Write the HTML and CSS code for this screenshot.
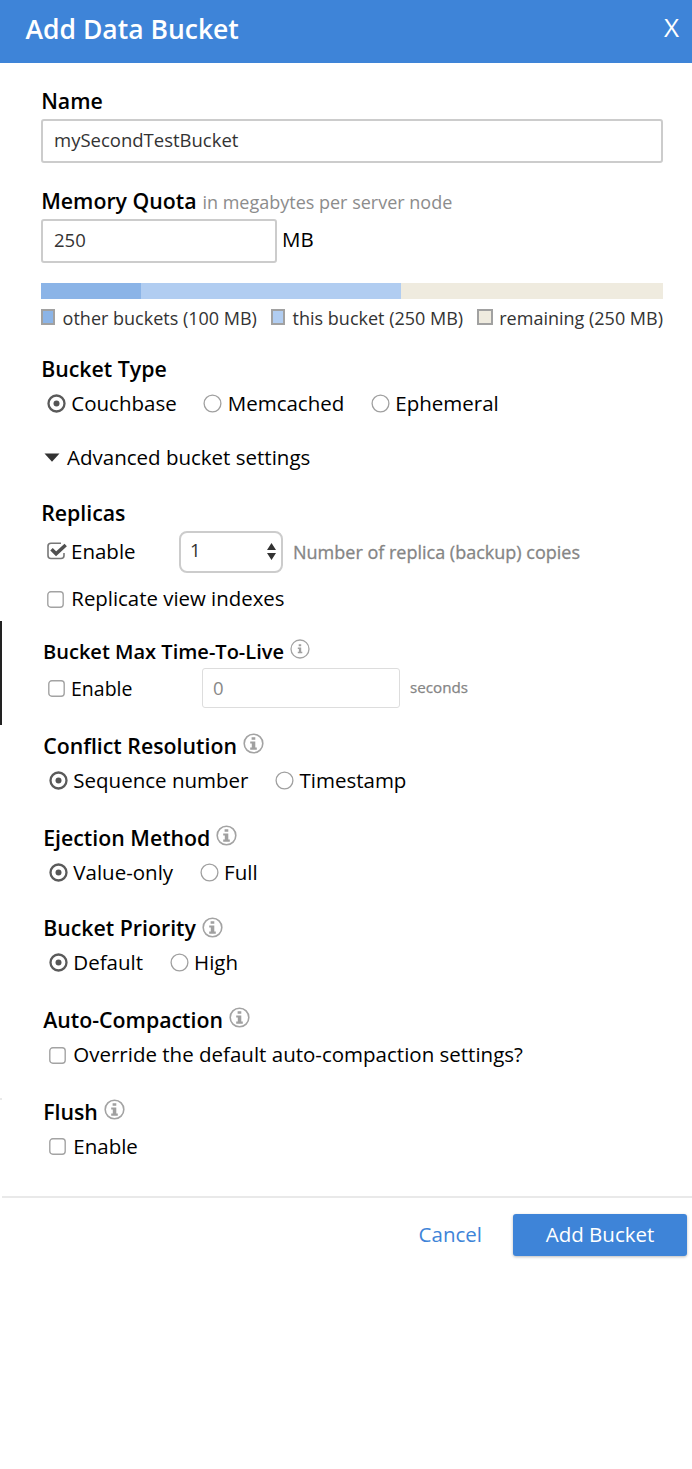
FILE: index.html
```html
<!DOCTYPE html>
<html lang="en">
<head>
<meta charset="utf-8">
<title>Add Data Bucket</title>
<link rel="stylesheet" href="styles.css">
</head>
<body>
<svg class="defs" width="0" height="0">
  <symbol id="info" viewBox="0 0 21 21"><circle cx="10.5" cy="10.5" r="9.3" fill="none" stroke="#a3a3a3" stroke-width="1.6"/><path d="M8.6 4.2h3.7v2.6H8.6zM7.2 8.4h5.1v6.2h1.5v2.1H7.2v-2.1h1.6v-4.1H7.2z" fill="#a0a0a0"/></symbol>
  <symbol id="info-thin" viewBox="0 0 20 20"><circle cx="10" cy="10" r="9" fill="none" stroke="#a3a3a3" stroke-width="1.3"/><path d="M8.7 5.3h2.5v1.9H8.7zM7.8 8.4h3.4v4.4h1.1v1.5H7.8v-1.5h1.1v-2.9H7.8z" fill="#a0a0a0"/></symbol>
  <symbol id="on" viewBox="0 0 19 19"><circle cx="9.5" cy="9.5" r="8" fill="none" stroke="#5a5a5a" stroke-width="2.3"/><circle cx="9.5" cy="9.5" r="3" fill="#555"/></symbol>
  <symbol id="off" viewBox="0 0 19 19"><circle cx="9.5" cy="9.5" r="8.4" fill="none" stroke="#a0a0a0" stroke-width="1.3"/></symbol>
  <symbol id="box" viewBox="0 0 17 17"><rect x=".8" y=".8" width="15.4" height="15.4" rx="3" fill="none" stroke="#a3a3a3" stroke-width="1.4"/></symbol>
</svg>
<span class="edge"></span><span class="tick"></span>
<header class="header"><h1 class="title">Add Data Bucket</h1><span class="close">X</span></header>
<main class="form">
  <section class="group name">
    <div class="row"><h2 class="label">Name</h2></div>
    <div class="input">mySecondTestBucket</div>
  </section>
  <section class="group quota">
    <div class="row"><h2 class="label">Memory Quota</h2><span class="hint">in megabytes per server node</span></div>
    <div class="quota-row"><div class="input short">250</div><span class="unit">MB</span></div>
    <div class="bar"><i class="used"></i><i class="this"></i></div>
    <div class="legend"><span><i class="swatch used"></i>other buckets (100 MB)</span><span><i class="swatch this"></i>this bucket (250 MB)</span><span><i class="swatch rest"></i>remaining (250 MB)</span></div>
  </section>
  <section class="group type">
    <div class="row"><h2 class="label">Bucket Type</h2></div>
    <div class="row options"><svg class="radio"><use href="#on"/></svg><span class="opt">Couchbase</span><svg class="radio"><use href="#off"/></svg><span class="opt">Memcached</span><svg class="radio"><use href="#off"/></svg><span class="opt">Ephemeral</span></div>
  </section>
  <div class="row advanced"><svg class="arrow" viewBox="0 0 16 9"><path d="M.5.5h15L8 8.7z" fill="#333"/></svg><span class="adv">Advanced bucket settings</span></div>
  <section class="group replicas">
    <div class="row"><h2 class="label">Replicas</h2></div>
    <div class="row replica-row">
      <svg class="checked" viewBox="0 0 20 18"><path d="M14 1.2H4Q1 1.2 1 4v9.5q0 3 3 3h10q3 0 3-3V11" fill="none" stroke="#777" stroke-width="1.6"/><path d="M4.5 7.2l4.6 4.6L18.7 3" fill="none" stroke="#505050" stroke-width="3.5"/></svg>
      <span class="opt enable">Enable</span>
      <div class="select"><span>1</span><svg class="sort" viewBox="0 0 9 17"><path d="M0 7h9L4.5 0zM0 10h9l-4.5 7z" fill="#333"/></svg></div>
      <span class="copies">Number of replica (backup) copies</span>
    </div>
    <div class="row options view"><svg class="check"><use href="#box"/></svg><span class="opt">Replicate view indexes</span></div>
  </section>
  <div class="more">
    <section class="group ttl">
      <div class="row"><h2 class="label">Bucket Max Time-To-Live</h2><svg class="info small"><use href="#info-thin"/></svg></div>
      <div class="row ttl-row"><svg class="check"><use href="#box"/></svg><span class="opt enable">Enable</span><div class="input disabled">0</div><span class="seconds">seconds</span></div>
    </section>
    <section class="group conflict">
      <div class="row"><h2 class="label">Conflict Resolution</h2><svg class="info"><use href="#info"/></svg></div>
      <div class="row options"><svg class="radio"><use href="#on"/></svg><span class="opt">Sequence number</span><svg class="radio"><use href="#off"/></svg><span class="opt">Timestamp</span></div>
    </section>
    <section class="group eject">
      <div class="row"><h2 class="label">Ejection Method</h2><svg class="info"><use href="#info"/></svg></div>
      <div class="row options"><svg class="radio"><use href="#on"/></svg><span class="opt">Value-only</span><svg class="radio"><use href="#off"/></svg><span class="opt">Full</span></div>
    </section>
    <section class="group priority">
      <div class="row"><h2 class="label">Bucket Priority</h2><svg class="info"><use href="#info"/></svg></div>
      <div class="row options"><svg class="radio"><use href="#on"/></svg><span class="opt">Default</span><svg class="radio"><use href="#off"/></svg><span class="opt">High</span></div>
    </section>
    <section class="group compact">
      <div class="row"><h2 class="label">Auto-Compaction</h2><svg class="info"><use href="#info"/></svg></div>
      <div class="row options"><svg class="check"><use href="#box"/></svg><span class="opt">Override the default auto-compaction settings?</span></div>
    </section>
    <section class="group flush">
      <div class="row"><h2 class="label">Flush</h2><svg class="info"><use href="#info"/></svg></div>
      <div class="row options"><svg class="check"><use href="#box"/></svg><span class="opt">Enable</span></div>
    </section>
  </div>
</main>
<footer class="footer"><span class="cancel">Cancel</span><span class="button">Add Bucket</span></footer>
</body>
</html>
```

FILE: styles.css
```css
* { box-sizing: border-box; }
body { margin: 0; background: #fff; color: #000; font: 20.5px/30px "Open Sans", "Noto Sans", sans-serif; position: relative; white-space: nowrap; min-height: 1469px; }
h1, h2 { margin: 0; font: inherit; }
svg { display: block; flex: none; }
.defs { position: absolute; }
.edge { position: absolute; left: 0; top: 621px; width: 2px; height: 104px; background: #222; }
.tick { position: absolute; left: 0; top: 1098px; width: 2px; height: 2px; background: #e9e9e9; }
.header { height: 63px; background: #3e84d8; color: #fff; display: flex; justify-content: space-between; padding: 0 13px 0 25.5px; }
.title { font-size: 26.5px; font-weight: 600; line-height: 58px; }
.close { font-size: 26px; line-height: 55px; }
.form { padding: 0 29px 0 41px; }
.row { height: 30px; display: flex; align-items: center; }
.label { font-weight: 600; font-size: 21.3px; line-height: 28px; margin: 0 0 0 .2px; }
.name { padding-top: 23px; }
.input { height: 44px; margin-top: 3px; border: 2px solid #ccc; border-radius: 3px; padding-left: 11px; font-size: 18.5px; line-height: 38px; color: #333; }
.quota { padding-top: 23px; }
.hint { color: #8c8c8c; font-size: 18px; margin: 2px 0 0 5.8px; }
.quota-row { display: flex; }
.short { width: 236px; }
.unit { margin: 8px 0 0 5px; }
.bar { height: 16px; margin-top: 20px; background: #efebdf; display: flex; }
.used { background: #8bb4e7; width: 100px; }
.this { background: #b1cdf1; width: 260px; }
.legend { height: 24px; margin-top: 7px; display: flex; justify-content: space-between; font-size: 18px; line-height: 24px; color: #333; }
.legend span { display: flex; }
.swatch { width: 14px; height: 16px; margin: 3px 7.6px 0 0; border: 2px solid #a1a1a1; }
.rest { width: 16px; margin-right: 6px; background: #efebdf; }
.type { padding-top: 24px; }
.type .options { margin-top: 4px; }
.options { padding-left: 6px; }
.radio { width: 19px; height: 19px; }
.check { width: 17px; height: 17px; }
.opt { margin-left: 5.3px; }
.opt + .radio { margin-left: 26.7px; }
.check + .opt { margin-left: 7.3px; }
.advanced { margin-top: 24px; padding-left: 3px; }
.arrow { width: 16px; height: 9px; }
.adv { margin-left: 7px; }
.replicas { padding-top: 26px; }
.replica-row { height: 42px; margin-top: 3px; padding-left: 6px; }
.checked { width: 20px; height: 18px; margin-top: -2px; }
.checked + .opt { margin: -2px 0 0 4px; width: 108px; }
.select { width: 104px; height: 42px; border: 2px solid #ccc; border-radius: 8px; display: flex; justify-content: space-between; padding: 0 5px 0 9px; font-size: 18.5px; line-height: 34px; color: #333; }
.sort { width: 9px; height: 17px; margin-top: 10px; }
.copies { color: #858585; font-size: 18px; -webkit-text-stroke: .3px #858585; margin-left: 10px; }
.view { margin-top: 10px; }
.view .check { margin-top: 2px; }
.view .opt { font-size: 20.4px; }
.more { margin-left: 2px; padding-top: 23px; }
.ttl .label { font-size: 20.05px; line-height: 29px; margin: 0; }
.info { width: 21px; height: 21px; margin: -6px 0 0 5.6px; }
.small { width: 20px; height: 20px; margin-top: -4px; }
.ttl-row { height: 40px; margin-top: 2px; padding-left: 5px; }
.ttl-row .enable { margin: 2px 0 0 6px; width: 131px; font-size: 19.5px; }
.disabled { width: 198px; height: 40px; margin: 0; padding-left: 10px; border: 1px solid #ddd; line-height: 38px; color: #888; }
.seconds { color: #858585; font-size: 15.2px; -webkit-text-stroke: .25px #858585; margin: -2px 0 0 10px; }
.conflict { padding-top: 23px; }
.conflict .options, .eject .options, .priority .options, .compact .options, .flush .options { margin-top: 4px; }
.compact .check { margin-top: 2px; }
.eject, .compact, .flush { padding-top: 28px; }
.priority { padding-top: 26px; }
.priority .info { margin-top: -2px; }
.footer { margin: 35px 0 0 2px; border-top: 2px solid #e9e9e9; padding: 16px 5px 0 0; display: flex; justify-content: flex-end; line-height: 41px; }
.cancel { color: #3e84d8; margin-right: 31px; }
.button { width: 174px; height: 42px; border-radius: 3px; background: #3e84d8; color: #fff; text-align: center; box-shadow: 0 1px 3px #bbb; }
```
